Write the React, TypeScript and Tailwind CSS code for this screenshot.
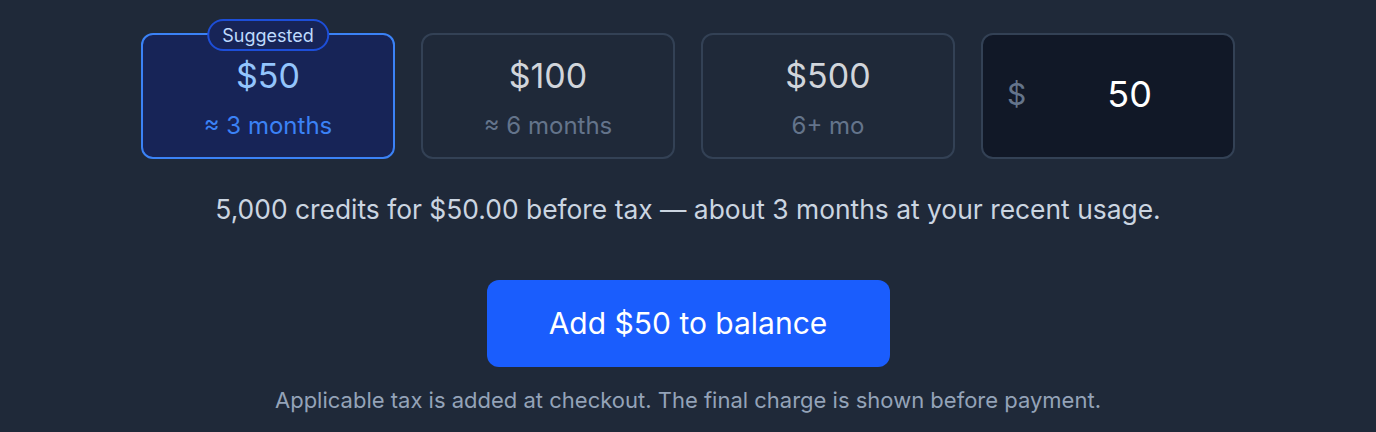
import React from "react";

const font = { fontFamily: "Inter, 'Noto Sans', sans-serif" };

export default function App() {
  return (
    <div className="w-[1376px] h-[432px] bg-[#1f2939] flex flex-col items-center pt-[33px]" style={font}>
      <div className="flex gap-[26px]">
        <div className="relative w-[254px] h-[126px] rounded-[12px] border-2 border-[#3b82f6] bg-[#172457] flex flex-col items-center pt-[21px]">
          <div className="absolute left-1/2 -translate-x-1/2 top-[-16px] h-[32px] px-[13px] rounded-full border-2 border-[#1d4ed8] bg-[#172457] flex items-center text-[18px] text-[#bfdbfe]">
            Suggested
          </div>
          <div className="text-[34px] leading-[40px] text-[#93c5fd]">$50</div>
          <div className="mt-[15px] text-[24px] leading-[30px] text-[#3b82f6]">≈ 3 months</div>
        </div>
        <div className="w-[254px] h-[126px] rounded-[12px] border-2 border-[#334155] flex flex-col items-center pt-[21px]">
          <div className="text-[34px] leading-[40px] text-[#d1d5db]">$100</div>
          <div className="mt-[15px] text-[24px] leading-[30px] text-[#64748b]">≈ 6 months</div>
        </div>
        <div className="w-[254px] h-[126px] rounded-[12px] border-2 border-[#334155] flex flex-col items-center pt-[21px]">
          <div className="text-[34px] leading-[40px] text-[#d1d5db]">$500</div>
          <div className="mt-[15px] text-[24px] leading-[30px] text-[#64748b]">6+ mo</div>
        </div>
        <div className="w-[254px] h-[126px] rounded-[12px] border-2 border-[#334155] bg-[#111827] flex items-center pl-[24px] pb-[4px]">
          <span className="text-[30px] text-[#64748b]">$</span>
          <span className="flex-1 text-center text-[36px] text-white">50</span>
        </div>
      </div>
      <div className="mt-[34px] text-[26.4px] leading-[32px] text-[#cbd5e1]">
        5,000 credits for $50.00 before tax — about 3 months at your recent usage.
      </div>
      <button className="mt-[55px] w-[403px] h-[87px] rounded-[12px] bg-[#1a5dfd] text-white text-[30px]">
        Add $50 to balance
      </button>
      <div className="mt-[19px] text-[22px] leading-[28px] text-[#94a3b8]">
        Applicable tax is added at checkout. The final charge is shown before payment.
      </div>
    </div>
  );
}
